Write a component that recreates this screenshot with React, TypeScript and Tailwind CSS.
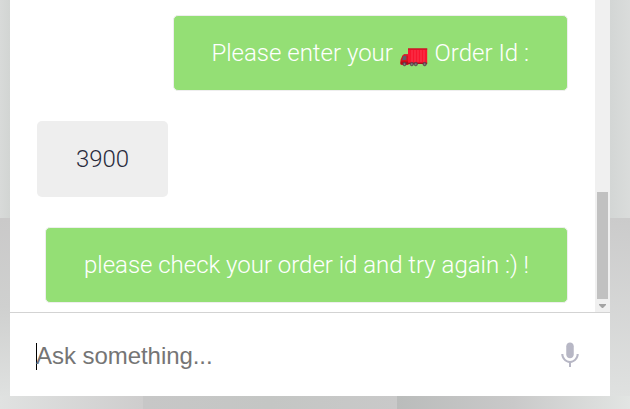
import React from "react";

function Truck() {
  return (
    <svg className="mt-1.5 mr-px ml-px h-[21px] w-7 shrink-0" viewBox="0 0 28 21">
      <path d="M0.5 18.5V14l2-4.5L4.7 8H8.5v11H1.5z" fill="#d9101f" />
      <path d="M2.3 9.5L4.5 8h4v1.5z" fill="#c9303b" />
      <path d="M3.2 10H6.3v3.8l-4.3.4z" fill="#5d5c69" />
      <path d="M0.5 15.5h8v2.5h-8z" fill="#b90917" />
      <path d="M8 2.5H27.2V17H8z" fill="#f8152f" />
      <path d="M8 2.5H27.2v1H8z" fill="#b51626" />
      <path d="M12 4v12M15 4v12M18 4v12M21 4v12M24 4v12" stroke="#fb4558" strokeWidth="0.8" />
      <path d="M1.5 16.7H27.2V18H1.5z" fill="#a5101e" />
      <g fill="#66525b" stroke="#503d45" strokeWidth="0.5">
        <circle cx="4.5" cy="18.1" r="1.8" />
        <circle cx="11.8" cy="18.1" r="1.8" />
        <circle cx="15.8" cy="18.1" r="1.8" />
        <circle cx="24.7" cy="18.1" r="1.8" />
      </g>
      <g fill="#a89ca2">
        <circle cx="4.5" cy="18.1" r="0.6" />
        <circle cx="11.8" cy="18.1" r="0.6" />
        <circle cx="15.8" cy="18.1" r="0.6" />
        <circle cx="24.7" cy="18.1" r="0.6" />
      </g>
    </svg>
  );
}

function Mic() {
  return (
    <svg className="h-[30px] w-[30px]" viewBox="0 0 24 24" fill="#b7b7c5">
      <path d="M12 14.5c1.66 0 3-1.34 3-3V5c0-1.66-1.34-3-3-3S9 3.34 9 5v6.5c0 1.66 1.34 3 3 3z" />
      <path d="M17.3 11.2c0 3-2.54 5.6-5.3 5.6S6.7 14.2 6.7 11.2H5c0 3.41 2.72 6.63 6.2 7.1V21.5h1.6v-3.2c3.48-.47 6.2-3.69 6.2-7.1h-1.7z" />
    </svg>
  );
}

export default function App() {
  return (
    <div className="flex h-[409px] w-[630px] flex-col overflow-hidden font-[Roboto,sans-serif]">
      <div className="flex h-[396px]">
        <div className="flex w-[10px] flex-col">
          <div className="h-[218px] bg-linear-to-r from-[#d8dad9] to-[#d2d5d3]" />
          <div className="flex-1 bg-linear-to-b from-[#cac9c9] via-[#cfd0cf] to-[#dfe1e0]" />
        </div>
        <main className="flex w-[600px] flex-col bg-white">
          <section className="flex h-[312px]">
            <div className="flex w-[585px] flex-col gap-[30px] px-[27px] pt-[15px] text-2xl font-light text-white">
              <div className="flex h-[76px] shrink-0 items-center self-end rounded-[5px] border border-[#eeeeee] bg-[#94df75] pr-[38px] pl-[37px] whitespace-pre">
                <span>Please enter your </span>
                <Truck />
                <span> Order Id :</span>
              </div>
              <div className="flex h-[76px] w-[131px] shrink-0 items-center justify-center rounded-[5px] bg-[#eeeeee] text-[#292b3c]">3900</div>
              <div className="flex h-[76px] shrink-0 items-center self-end rounded-[5px] border border-[#eeeeee] bg-[#94df75] px-[38px] tracking-[-0.02px] whitespace-pre">please check your order id and try again :) !</div>
            </div>
            <div className="flex w-[15px] flex-col items-center bg-[#f0f0f0] pt-48">
              <div className="h-[107px] w-[11px] bg-[#c1c1c1]" />
              <svg className="mt-[5px] h-1 w-[7px]" viewBox="0 0 7 4" fill="#a3a3a3"><path d="M0 0H7V1L4 4H3L0 1Z" /></svg>
            </div>
          </section>
          <footer className="flex h-[84px] items-center border-t border-[#d3d3d3] pt-[3px] pr-[25.5px] pl-[26px]">
            <div className="h-[27px] w-px bg-black" />
            <span className="-ml-px flex-1 font-['Liberation_Sans',Arial,sans-serif] text-2xl tracking-[-0.05px] text-[#757575]">Ask something...</span>
            <div className="-mt-[3px]"><Mic /></div>
          </footer>
        </main>
        <div className="flex w-5 flex-col">
          <div className="h-[218px] bg-linear-to-r from-[#d3d6d5] to-[#dadcdb]" />
          <div className="flex-1 bg-linear-to-b from-[#cbcbcb] to-[#dfe1e0]" />
        </div>
      </div>
      <div className="flex h-[13px]">
        <div className="w-[143px] bg-linear-to-r from-[#e0e2e1] to-[#cecdcd]" />
        <div className="w-[254px] bg-linear-to-r from-[#c7c7c7] via-[#c4c6c4] to-[#c9c9c9]" />
        <div className="w-[233px] bg-linear-to-r from-[#babcbb] via-[#c9c9c9] to-[#e2e5e3]" />
      </div>
    </div>
  );
}
